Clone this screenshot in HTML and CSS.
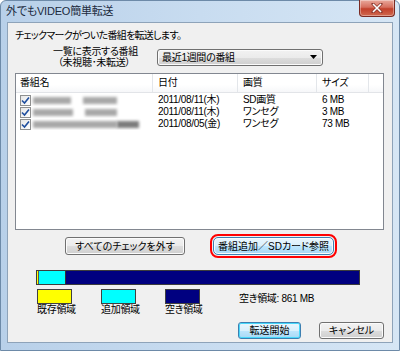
FILE: index.html
```html
<!DOCTYPE html>
<html lang="ja">
<head>
<meta charset="utf-8">
<title>外でもVIDEO簡単転送</title>
<link rel="stylesheet" href="styles.css">
</head>
<body>
<div class="window">
  <div class="titlebar">
    <span class="title">外でもVIDEO簡単転送</span>
    <span class="close">
      <svg width="12" height="10" viewBox="0 0 12 10"><path d="M2 1 L10 9 M10 1 L2 9" stroke="#8a3a30" stroke-width="3" stroke-linecap="square"/><path d="M2 1 L10 9 M10 1 L2 9" stroke="#ffffff" stroke-width="1.6"/></svg>
    </span>
  </div>
  <div class="client">
    <p class="intro">チェックマークがついた番組を転送します。</p>
    <div class="filter">
      <div class="filter-label">一覧に表示する番組<br>（未視聴･未転送）</div>
      <div class="select">
        <span>最近1週間の番組</span>
        <svg width="7" height="4" viewBox="0 0 7 4"><path d="M0 0 H7 L3.5 4 Z" fill="#000"/></svg>
      </div>
    </div>
    <div class="listbox">
      <div class="row head">
        <span class="c1">番組名</span><span class="c2">日付</span><span class="c3">画質</span><span class="c4">サイズ</span><span class="c5"></span>
      </div>
      <div class="row">
        <span class="c1"><i class="chk"><svg width="9" height="9" viewBox="0 0 9 9"><path d="M1 4.5 L3.5 7 L8 1.5" fill="none" stroke="#1f4e9e" stroke-width="1.6"/></svg></i><b class="blur" style="width:38px"></b><b class="blur gap" style="width:34px"></b></span>
        <span class="c2">2011/08/11(木)</span><span class="c3">SD画質</span><span class="c4">6 MB</span><span class="c5"></span>
      </div>
      <div class="row">
        <span class="c1"><i class="chk"><svg width="9" height="9" viewBox="0 0 9 9"><path d="M1 4.5 L3.5 7 L8 1.5" fill="none" stroke="#1f4e9e" stroke-width="1.6"/></svg></i><b class="blur" style="width:40px"></b><b class="blur gap" style="width:32px"></b></span>
        <span class="c2">2011/08/11(木)</span><span class="c3">ワンセグ</span><span class="c4">3 MB</span><span class="c5"></span>
      </div>
      <div class="row">
        <span class="c1"><i class="chk"><svg width="9" height="9" viewBox="0 0 9 9"><path d="M1 4.5 L3.5 7 L8 1.5" fill="none" stroke="#1f4e9e" stroke-width="1.6"/></svg></i><b class="blur" style="width:84px"></b><b class="blur dark" style="width:22px"></b></span>
        <span class="c2">2011/08/05(金)</span><span class="c3">ワンセグ</span><span class="c4">73 MB</span><span class="c5"></span>
      </div>
    </div>
    <div class="actions">
      <button class="btn wide">すべてのチェックを外す</button>
      <button class="btn wide hot">番組追加／SDカード参照</button>
    </div>
    <div class="bar">
      <span class="seg used" style="width:2px"></span>
      <span class="seg add" style="width:27px"></span>
      <span class="seg free"></span>
    </div>
    <div class="legend">
      <div class="item"><span class="box used"></span><span>既存領域</span></div>
      <div class="item"><span class="box add"></span><span>追加領域</span></div>
      <div class="item"><span class="box free"></span><span>空き領域</span></div>
      <div class="space">空き領域: 861 MB</div>
    </div>
    <div class="footer">
      <button class="btn small default">転送開始</button>
      <button class="btn small">キャンセル</button>
    </div>
  </div>
</div>
</body>
</html>
```

FILE: styles.css
```css
* { box-sizing: border-box; }
html, body { margin: 0; padding: 0; }
body {
  width: 400px;
  height: 351px;
  overflow: hidden;
  font-family: "Liberation Sans", "Noto Sans CJK JP", sans-serif;
  font-size: 10px;
  letter-spacing: -0.3px;
  font-feature-settings: "palt";
  color: #000;
}
.window {
  width: 400px;
  height: 351px;
  background: linear-gradient(to right, #b8d0e9 0%, #c8dcf0 50%, #d6e6f5 100%);
  border: 1px solid #6d8aa8;
  border-radius: 6px 6px 0 0;
  display: flex;
  flex-direction: column;
}
.titlebar {
  height: 21px;
  display: flex;
  justify-content: space-between;
  align-items: flex-start;
  padding: 0 4px 0 5px;
}
.title {
  font-size: 11px;
  letter-spacing: -0.2px;
  line-height: 21px;
  color: #1b2a3d;
}
.close {
  width: 36px;
  height: 17px;
  margin-top: -1px;
  border: 1px solid #7a2a22;
  border-top: none;
  border-radius: 0 0 4px 4px;
  background: linear-gradient(#e9a99c 0%, #d66f5e 45%, #c2402b 55%, #d0694f 100%);
  box-shadow: inset 0 0 0 1px rgba(255,255,255,0.35);
  display: flex;
  align-items: center;
  justify-content: center;
}
.client {
  margin: 0 6px 7px 6px;
  flex: 1;
  background: #f0f0f0;
  border: 1px solid #8ea3b9;
  padding: 6px 8px 0 7px;
  display: flex;
  flex-direction: column;
}
.intro {
  margin: 0;
  line-height: 14px;
  height: 14px;
  white-space: nowrap;
  letter-spacing: -0.7px;
}
.filter {
  margin-top: 3px;
  height: 22px;
  display: flex;
  align-items: center;
}
.filter-label {
  margin-left: 38px;
  width: 82px;
  text-align: center;
  line-height: 11px;
  white-space: nowrap;
}
.select {
  margin-left: 22px;
  width: 166px;
  height: 17px;
  border: 1px solid #707070;
  border-radius: 3px;
  background: linear-gradient(#f2f2f2 0%, #ebebeb 50%, #dddddd 51%, #cfcfcf 100%);
  box-shadow: inset 0 0 0 1px #fbfbfb;
  display: flex;
  align-items: center;
  justify-content: space-between;
  padding: 0 5px 0 4px;
  line-height: 15px;
  white-space: nowrap;
}
.listbox {
  margin-top: 5px;
  width: 369px;
  height: 157px;
  border: 1px solid #828790;
  background: #fff;
}
.row {
  display: grid;
  grid-template-columns: 137px 85px 79px 52px 1fr;
  height: 12px;
  line-height: 12px;
}
.row:nth-child(2) { margin-top: 1px; }
.row span { padding-left: 4px; white-space: nowrap; overflow: hidden; }
.row .c1 { display: flex; align-items: center; padding-left: 4px; }
.row .c2 { padding-left: 5px; }
.row .c3, .row .c4 { padding-left: 5px; }
.head {
  height: 19px;
  line-height: 18px;
  background: linear-gradient(#ffffff 0%, #ffffff 60%, #f6f7f9 100%);
  border-bottom: 1px solid #e2e4e8;
}
.head span { border-right: 1px solid #e3e6ea; }
.head .c5 { border-right: none; }
.chk {
  width: 11px;
  height: 11px;
  border: 1px solid #8e8f8f;
  background: linear-gradient(135deg, #e6e6e6, #ffffff);
  display: inline-flex;
  align-items: center;
  justify-content: center;
  flex: none;
}
.blur {
  display: inline-block;
  height: 7px;
  margin-left: 2px;
  background: #a8a8a8;
  filter: blur(1.6px);
}
.blur.gap { margin-left: 12px; }
.blur.dark { background: #7c7c7c; margin-left: 0; }
.actions {
  margin-top: 7px;
  display: flex;
  height: 18px;
  padding-left: 50px;
  gap: 28px;
}
.btn {
  font: inherit;
  color: #000;
  border: 1px solid #707070;
  border-radius: 3px;
  background: linear-gradient(#f2f2f2 0%, #ebebeb 50%, #dddddd 51%, #cfcfcf 100%);
  box-shadow: inset 0 0 0 1px #fbfbfb;
  padding: 0;
  line-height: 15px;
  white-space: nowrap;
  cursor: default;
}
.btn.wide { width: 120px; height: 18px; }
.btn.hot {
  width: 121px;
  border-color: #3c7fb1;
  background: linear-gradient(#eaf6fd 0%, #d9f0fc 50%, #bee6fd 51%, #a7d9f5 100%);
  outline: 2px solid #ff0000;
  outline-offset: 1px;
  border-radius: 5px;
}
.bar {
  margin: 15px 0 0 21px;
  width: 324px;
  height: 15px;
  border: 1px solid #3c3c3c;
  display: flex;
}
.seg { height: 100%; }
.seg.used { background: #ffff00; border-right: 1px solid #555; }
.seg.add { background: #00ffff; border-right: 1px solid #333; }
.seg.free { flex: 1; background: #000080; }
.legend {
  margin: 4px 0 0 22px;
  display: flex;
  align-items: flex-start;
}
.item {
  width: 35px;
  margin-right: 29px;
  display: flex;
  flex-direction: column;
  align-items: flex-start;
  white-space: nowrap;
}
.item:nth-child(3) { margin-right: 0; }
.box {
  width: 35px;
  height: 15px;
  border: 1px solid #404040;
}
.box.used { background: #ffff00; }
.box.add { background: #00ffff; }
.box.free { background: #000080; }
.item span:last-child {
  line-height: 12px;
}
.space {
  margin-left: 39px;
  margin-top: 4px;
  line-height: 12px;
  white-space: nowrap;
}
.footer {
  margin-top: 6px;
  display: flex;
  justify-content: flex-end;
  gap: 18px;
}
.btn.small { width: 65px; height: 17px; }
.btn.default {
  width: 63px;
  border-color: #3c7fb1;
  box-shadow: inset 0 0 0 1px #48d8fb;
  background: linear-gradient(#eaf6fd 0%, #d9f0fc 50%, #bee6fd 51%, #a7d9f5 100%);
}
```
